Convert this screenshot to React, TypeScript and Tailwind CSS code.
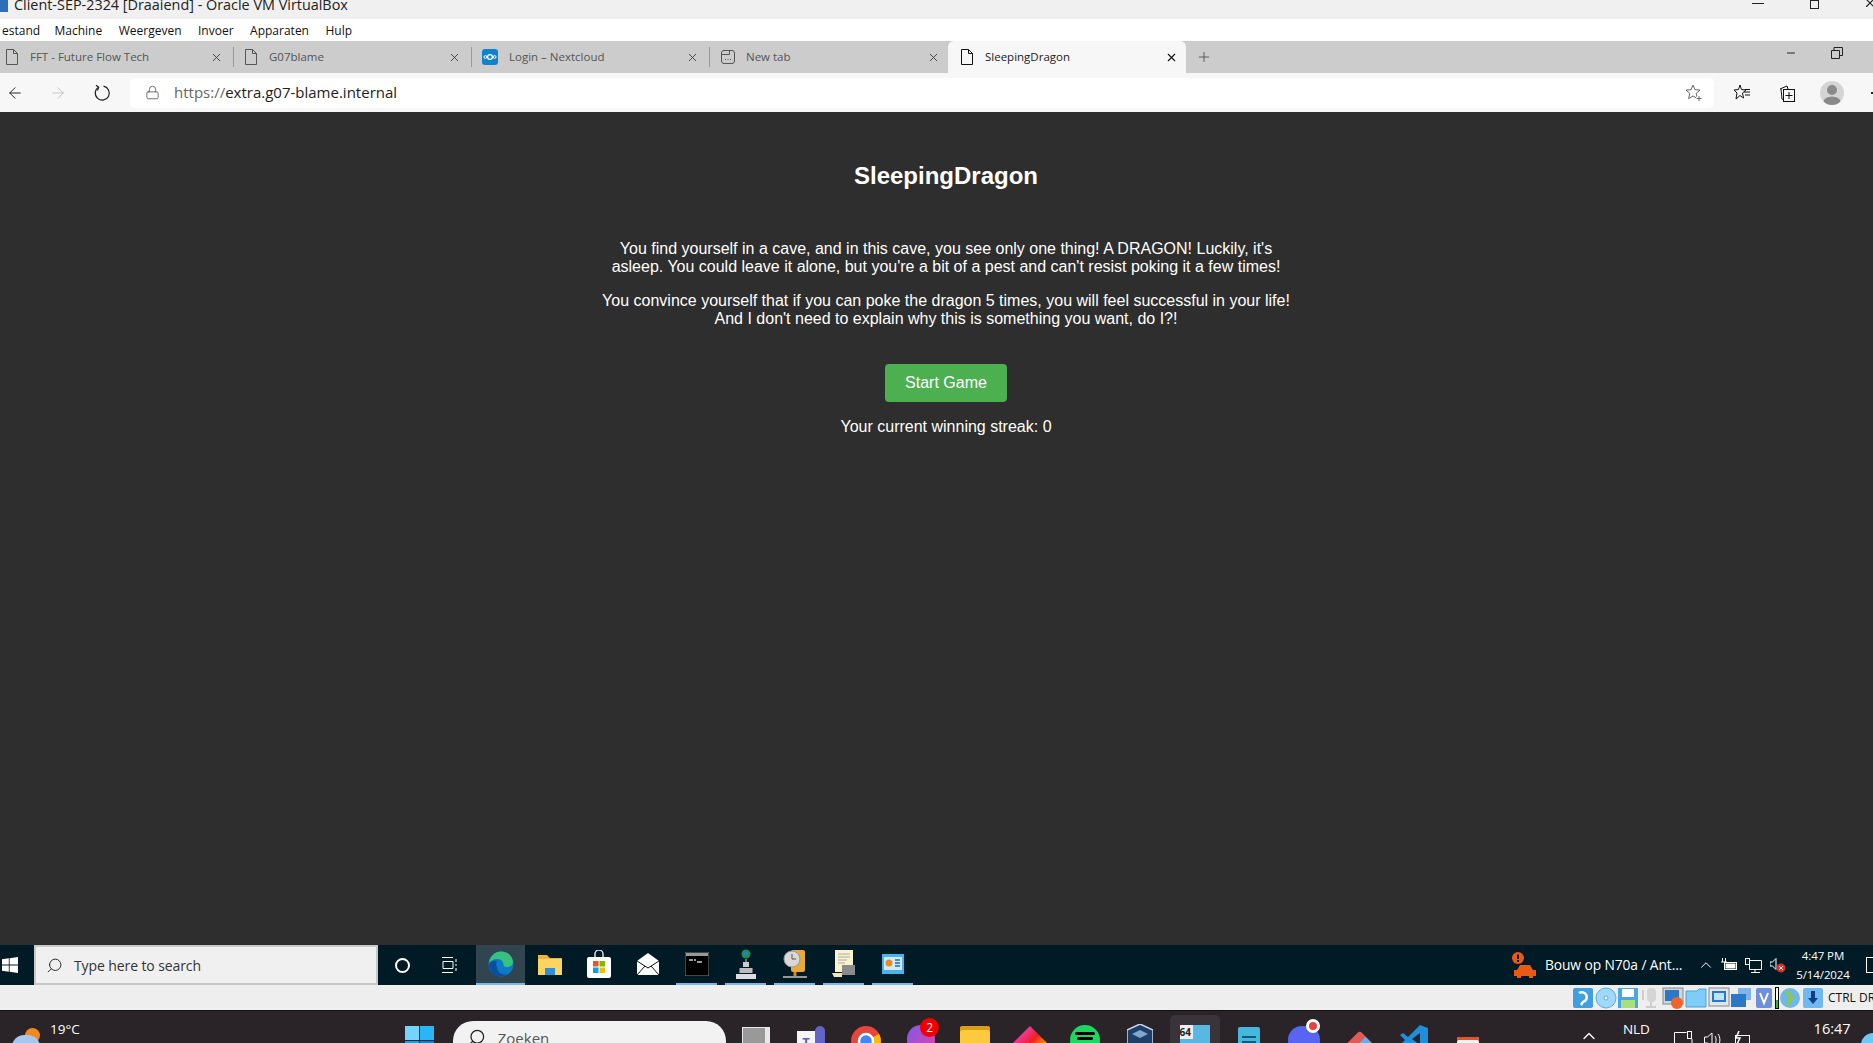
import React, { FC, ReactNode } from "react";
import { ArrowLeft, ArrowRight, Lock, Plus, X, Search, Minus, ChevronUp } from "lucide-react";

const uiFont = "font-['Open_Sans','Noto_Sans',sans-serif]";

const FileIcon: FC<{ dark?: boolean }> = ({ dark }) => (
  <svg width="14" height="16" viewBox="0 0 14 16" fill="none" stroke={dark ? "#111" : "#555"} strokeWidth="1" className="shrink-0">
    <path d="M1.5.5h7l4 4v11h-11zM8.5.5v4h4" />
  </svg>
);

const NewTabIcon = () => (
  <svg width="14" height="16" viewBox="0 0 14 16" fill="none" stroke="#555" className="shrink-0">
    <rect x=".5" y="1.5" width="13" height="13" rx="2.5" />
    <path d="M1 5.5h7.5V2" />
    <path d="M4 10.5h1M6.5 10.5h1M9 10.5h1" />
  </svg>
);

const CloudIcon = () => (
  <svg width="16" height="16" viewBox="0 0 16 16" className="shrink-0">
    <rect width="16" height="16" rx="3" fill="#0f82ce" />
    <circle cx="8" cy="8" r="2.4" fill="none" stroke="#fff" strokeWidth="1.3" />
    <circle cx="3.4" cy="8" r="1.4" fill="none" stroke="#fff" />
    <circle cx="12.6" cy="8" r="1.4" fill="none" stroke="#fff" />
  </svg>
);

const Tab: FC<{ icon: ReactNode; label: string; first?: boolean }> = ({ icon, label, first }) => (
  <div className={`flex h-full items-center ${first ? "w-[234px] pl-[5px]" : "w-[238px] pl-[10px]"} shrink-0`}>
    {icon}
    <span className="ml-[11px] flex-1 text-[11.5px] text-[#555]">{label}</span>
    <X size={13} color="#444" strokeWidth={1.8} />
    <span className="ml-[10px] h-[20px] w-px bg-[#9a9a9a]" />
  </div>
);

const WinLogo: FC<{ size: number; color: string }> = ({ size, color }) => (
  <svg width={size} height={size} viewBox="0 0 16 16" fill={color}>
    <path d="M0 2.3 6.8 1.3v6.2H0zM7.6 1.2 16 0v7.5H7.6zM0 8.4h6.8v6.3L0 13.7zM7.6 8.4H16V16l-8.4-1.2z" />
  </svg>
);

const Edge = () => (
  <svg width="26" height="26" viewBox="0 0 26 26">
    <circle cx="13" cy="13" r="12.5" fill="#0c7bc4" />
    <path d="M1 12C2 5 7 .5 13 .5c7 0 12 5 12 11 0 3-3 4.5-6 4.5-2 0-3.500-1-3.500-2 0-3-2-6-6-6-4 0-7 2-8.500 4z" fill="#36c27c" />
    <path d="M9 16c0 5 5 9 11 7-3 2-6 2.500-8 2.500C6 25.500 1 20 1 13c2-3 5-4 8-3-1 2-1 4 0 6z" fill="#0b4f9e" />
  </svg>
);

const Folder = () => (
  <svg width="24" height="22" viewBox="0 0 24 22">
    <path d="M0 2h9l3 3h12v17H0z" fill="#e9b43c" />
    <rect y="6" width="24" height="16" fill="#fcd462" />
    <rect x="7" y="15" width="10" height="7" fill="#2c8fd8" />
  </svg>
);

const Store = () => (
  <svg width="24" height="28" viewBox="0 0 24 28">
    <path d="M8 8V4a4 4 0 0 1 8 0v4" fill="none" stroke="#ddd" strokeWidth="1.500" />
    <rect y="7" width="24" height="21" rx="2" fill="#fff" />
    <rect x="6" y="11" width="5.500" height="5.500" fill="#f25022" />
    <rect x="12.500" y="11" width="5.500" height="5.500" fill="#7fba00" />
    <rect x="6" y="17.500" width="5.500" height="5.500" fill="#00a4ef" />
    <rect x="12.500" y="17.500" width="5.500" height="5.500" fill="#ffb900" />
  </svg>
);

const Mail = () => (
  <svg width="22" height="22" viewBox="0 0 22 22">
    <path d="M0 8 11 0l11 8v14H0z" fill="#fff" />
    <path d="M0 8l11 7 11-7M0 22l8-9M22 22l-8-9" stroke="#111" fill="none" />
  </svg>
);

const Cmd = () => (
  <svg width="24" height="24" viewBox="0 0 24 24">
    <rect width="24" height="24" fill="#000" stroke="#888" />
    <rect x="1" y="1" width="22" height="3" fill="#999" />
    <path d="M4 8h4M9 8h2M12 10h5" stroke="#ccc" strokeWidth="1.300" />
  </svg>
);

const Network = () => (
  <svg width="20" height="30" viewBox="0 0 20 30">
    <circle cx="10" cy="5" r="4.500" fill="#1f8f4f" />
    <path d="M7 3h5v3H8z" fill="#2e7bd0" />
    <path d="M10 10v3" stroke="#ccc" />
    <rect x="7" y="13" width="6" height="5" fill="#ccc" />
    <rect x="3.500" y="19" width="13" height="5" fill="#bbb" />
    <rect y="25" width="20" height="5" fill="#ddd" />
  </svg>
);

const TimeFolder = () => (
  <svg width="24" height="30" viewBox="0 0 24 30">
    <rect x="8" y="1" width="14" height="22" rx="2" fill="#e8a93a" />
    <circle cx="9" cy="10" r="8" fill="#d8d8d8" stroke="#999" />
    <path d="M9 5v5h4" stroke="#555" fill="none" />
    <path d="M12 23v4" stroke="#d08a1e" strokeWidth="3" />
    <rect y="27" width="24" height="2" fill="#999" />
  </svg>
);

const Script = () => (
  <svg width="24" height="30" viewBox="0 0 24 30">
    <path d="M3 1h18v22H3z" fill="#fbf2cf" />
    <path d="M6 5h12M6 8h12M6 11h9M6 14h7" stroke="#aaa" />
    <rect x="10" y="16" width="13" height="10" fill="#8a8a8a" />
    <path d="M0 24h10v4H2z" fill="#f3e7b5" />
  </svg>
);

const Panel = () => (
  <svg width="22" height="20" viewBox="0 0 22 20">
    <rect width="22" height="20" fill="#49b4ec" />
    <rect x="2" y="3" width="18" height="13" fill="#cfeafa" />
    <circle cx="7" cy="9" r="3.500" fill="#e88c2a" />
    <path d="M13 6h5M13 9h5M13 12h5" stroke="#1c6fb0" strokeWidth="1.500" />
  </svg>
);

const StatusIcon: FC<{ children: ReactNode }> = ({ children }) => (
  <svg width="22" height="22" viewBox="0 0 22 22" className="shrink-0">
    {children}
  </svg>
);

const VmStatus = () => (
  <div className="flex items-center gap-[0.6px]">
    <StatusIcon>
      <rect x="1" y="1" width="20" height="20" rx="2" fill="#3f9fe0" />
      <path d="M7 6a5 5 0 1 1 4 9l-2 3" fill="none" stroke="#fff" strokeWidth="2.500" />
    </StatusIcon>
    <StatusIcon>
      <circle cx="11" cy="11" r="10" fill="#9fd8f8" stroke="#56aee4" />
      <circle cx="11" cy="11" r="2" fill="#fff" stroke="#56aee4" />
    </StatusIcon>
    <StatusIcon>
      <rect x="1" y="1" width="20" height="20" fill="#4aa7e6" />
      <rect x="5" y="2" width="12" height="8" fill="#fff" />
      <rect x="4" y="13" width="14" height="8" fill="#a8e07a" />
    </StatusIcon>
    <StatusIcon>
      <rect x="7" y="1" width="9" height="14" rx="4" fill="#d5d5d5" />
      <path d="M3 3v10M11 15v4M6 20h10" stroke="#ccc" strokeWidth="2" />
    </StatusIcon>
    <StatusIcon>
      <rect x="1" y="1" width="20" height="16" fill="#cfd7de" stroke="#888" />
      <rect x="3" y="3" width="14" height="11" fill="#2b78c8" />
      <circle cx="15" cy="16" r="6" fill="#f0642a" />
    </StatusIcon>
    <StatusIcon>
      <path d="M1 4h11l2-2h7v18H1z" fill="#7fcdf6" stroke="#4aa3da" />
    </StatusIcon>
    <StatusIcon>
      <rect x="1" y="1" width="20" height="18" fill="#dfe5ea" stroke="#888" />
      <rect x="4" y="4" width="14" height="11" fill="#2b78c8" />
      <rect x="6" y="6" width="10" height="7" fill="#bfe3fa" />
    </StatusIcon>
    <StatusIcon>
      <rect x="8" y="1" width="13" height="12" fill="#7fb4ea" />
      <rect x="1" y="7" width="15" height="13" fill="#2b78c8" />
    </StatusIcon>
    <div className="flex items-center">
      <StatusIcon>
        <rect x="3" y="1" width="16" height="20" rx="2" fill="#6d8fdc" />
        <path d="M7 6l4 10 4-10" fill="none" stroke="#fff" strokeWidth="2" />
      </StatusIcon>
      <div className="flex h-[22px] w-[4px] shrink-0 items-end border border-black bg-white">
        <div className="h-[8px] w-full bg-[#2fb82f]" />
      </div>
    </div>
    <StatusIcon>
      <circle cx="11" cy="11" r="10" fill="#6fb6ea" />
      <path d="M9 3l6 8-6 8-2-2 3-6-3-6z" fill="#8ccb3f" />
    </StatusIcon>
    <StatusIcon>
      <rect x="1" y="1" width="20" height="20" rx="2" fill="#6db9f0" />
      <path d="M9 4h4v7h3l-5 6-5-6h3z" fill="#123d85" />
    </StatusIcon>
  </div>
);

const TaskSlot: FC<{ children: ReactNode; bar?: boolean; active?: boolean }> = ({ children, bar, active }) => (
  <div className={`relative flex h-full w-[49px] shrink-0 items-center justify-center pb-[2px] ${active ? "bg-[#30454f]" : ""}`}>
    {children}
    {bar && <span className={`absolute bottom-0 h-[2px] bg-[#76b9ed] ${active ? "inset-x-0" : "inset-x-[4px]"}`} />}
  </div>
);

const DockSlot: FC<{ children: ReactNode }> = ({ children }) => (
  <div className="relative flex h-[33px] w-[54.800px] shrink-0 justify-center pt-[8px]">{children}</div>
);

const App: FC = () => {
  return (
    <div className={`flex h-[1043px] w-[1873px] flex-col overflow-hidden bg-[#2e2e2e] ${uiFont}`}>
      {/* vm title */}
      <div className="flex h-[19px] shrink-0 items-start overflow-hidden bg-[#f0f0f0]">
        <div className="h-[12px] w-[8px] bg-[#2a6fb8]" />
        <span className="ml-[6px] text-[14.4px] leading-[10px] text-[#222]">
          Client-SEP-2324 [Draaiend] - Oracle VM VirtualBox
        </span>
        <div className="ml-auto flex items-start pt-[3px]">
          <span className="h-px w-[12px] bg-[#222]" />
          <span className="ml-[46px] mt-[-3px] h-[9px] w-[9px] border border-[#222]" />
          <X size={14} color="#222" className="ml-[44px] mt-[-7px] mr-[-4px]" />
        </div>
      </div>

      {/* vm menu */}
      <div className="flex h-[22px] shrink-0 items-center gap-[16.5px] overflow-hidden bg-white pl-[2px] pt-[1px] text-[12px] text-[#111]">
        <span className="w-[36px] shrink-0 text-right">estand</span>
        <span>Machine</span>
        <span>Weergeven</span>
        <span>Invoer</span>
        <span>Apparaten</span>
        <span>Hulp</span>
      </div>

      {/* tabs */}
      <div className="flex h-[32px] shrink-0 items-center bg-[#cccccc]">
        <Tab first icon={<FileIcon />} label="FFT - Future Flow Tech" />
        <Tab icon={<FileIcon />} label="G07blame" />
        <Tab icon={<CloudIcon />} label="Login – Nextcloud" />
        <div className="flex h-full w-[238px] shrink-0 items-center pl-[11px] pr-[7px]">
          <NewTabIcon />
          <span className="ml-[11px] flex-1 text-[11.5px] text-[#555]">New tab</span>
          <X size={13} color="#444" strokeWidth={1.8} className="mr-[1px]" />
        </div>
        <div className="flex h-full w-[238px] shrink-0 items-center rounded-t-[6px] bg-[#f7f7f7] pl-[12px] pr-[8px]">
          <FileIcon dark />
          <span className="ml-[11px] flex-1 text-[11.5px] text-[#222]">SleepingDragon</span>
          <X size={13} color="#111" strokeWidth={2} />
        </div>
        <Plus size={16} color="#444" strokeWidth={1.2} className="ml-[10px]" />
        <div className="ml-auto flex items-center pb-[9px]">
          <Minus size={12} color="#222" />
          <svg width="12" height="12" viewBox="0 0 12 12" fill="none" stroke="#222" className="ml-[34px] mr-[30px]">
            <path d="M.5 3.500h8v8h-8zM3 3.500V.5h8.500v8H8.500" />
          </svg>
        </div>
      </div>

      {/* address bar */}
      <div className="flex h-[39px] shrink-0 items-center bg-[#f7f7f7]">
        <div className="flex w-[130px] shrink-0 items-center">
          <ArrowLeft size={18} color="#222" strokeWidth={1.3} className="ml-[6px]" />
          <ArrowRight size={18} color="#c4c4c4" strokeWidth={1.3} className="ml-[25px]" />
          <svg width="18" height="18" viewBox="0 0 18 18" fill="none" stroke="#222" strokeWidth="1.200" className="ml-[26px]">
            <path d="M5.500 3.200A7 7 0 1 0 10.500 2.200" />
            <path d="M3 1.200l2.700 2-1.200 3.400" />
          </svg>
        </div>
        <div className="flex h-[30px] w-[1584px] shrink-0 items-center rounded-[5px] bg-white pl-[15px] pr-[12px]">
          <Lock size={15} color="#555" strokeWidth={1.3} />
          <span className="ml-[14px] flex-1 text-[15px] text-[#222]">
            <span className="text-[#666]">https://</span>extra.g07-blame.internal
          </span>
          <svg width="17" height="17" viewBox="0 0 17 17" fill="none" stroke="#666">
            <path d="M8 1l2 4.700 5 .4-3.800 3.300L12.400 14.500 8 12l-4.400 2.500 1.200-5.100L1 6.100l5-.4z" />
            <path d="M11 14.500h5M13.500 12v5" stroke="#fff" strokeWidth="3" />
            <path d="M11.500 14.500h5M14 12v5" />
          </svg>
        </div>
        <svg width="16" height="17" viewBox="0 0 16 17" fill="none" stroke="#111" className="ml-[20px] shrink-0">
          <path d="M6 1l1.500 4.500L12 6 8.500 9l1 5L6 11.500 2 15l1-6L0 6l4.500-.5zM10 8h6M11 11h5M11 5.500h5" />
        </svg>
        <svg width="16" height="18" viewBox="0 0 16 18" fill="none" stroke="#111" className="ml-[29px] shrink-0">
          <path d="M1 5l7-3 1 3M2 5l1 10 2 1" />
          <rect x="4.500" y="5.500" width="11" height="12" />
          <path d="M10 8v7M6.500 11.500h7" />
        </svg>
        <div className="ml-[25px] flex h-[24px] w-[24px] shrink-0 items-start justify-center overflow-hidden rounded-full bg-[#d4d4d4]">
          <svg width="24" height="24" viewBox="0 0 24 24" fill="#8a8a8a">
            <circle cx="12" cy="9" r="5" />
            <ellipse cx="12" cy="21" rx="8.500" ry="5.500" />
          </svg>
        </div>
        <span className="ml-[27px] h-[2px] w-[2px] shrink-0 bg-[#222]" />
      </div>

      {/* page */}
      <main className="flex min-h-0 flex-1 flex-col items-center bg-[#2e2e2e] pl-[19px] pt-[50px] text-center font-['Liberation_Sans',Arial,sans-serif] text-white">
        <h1 className="text-[24px] font-bold leading-[28px]">SleepingDragon</h1>
        <p className="mt-[50px] text-[16px] leading-[18px]">
          You find yourself in a cave, and in this cave, you see only one thing! A DRAGON! Luckily, it's
          <br />
          asleep. You could leave it alone, but you're a bit of a pest and can't resist poking it a few times!
        </p>
        <p className="mt-[16px] text-[16px] leading-[18px]">
          You convince yourself that if you can poke the dragon 5 times, you will feel successful in your life!
          <br />
          And I don't need to explain why this is something you want, do I?!
        </p>
        <button className="mt-[36px] h-[38px] w-[122px] rounded-[4px] bg-[#4caf50] text-[16px] text-white">
          Start Game
        </button>
        <p className="mt-[16px] text-[16px] leading-[18px]">Your current winning streak: 0</p>
      </main>

      {/* guest taskbar */}
      <div className="flex h-[40px] shrink-0 items-center bg-[#001a26] text-white">
        <div className="flex h-full w-[34px] shrink-0 items-center justify-center">
          <div className="mr-[14px]">
            <WinLogo size={16} color="#fff" />
          </div>
        </div>
        <div className="flex h-full w-[344px] shrink-0 items-center border-2 border-[#c8c8c8] bg-[#f0f0f0] pl-[10px] text-[14px] text-[#333]">
          <Search size={17} color="#222" strokeWidth={1.3} className="-scale-x-100" />
          <span className="ml-[11px] tracking-[-0.1px]">Type here to search</span>
        </div>
        <div className="flex h-full w-[48px] shrink-0 items-center justify-center">
          <span className="h-[15px] w-[15px] rounded-full border-2 border-white" />
        </div>
        <div className="flex h-full w-[47px] shrink-0 items-center justify-center">
          <svg width="16" height="16" viewBox="0 0 16 16" fill="none" stroke="#fff">
            <path d="M0 .5h11M0 15.500h11M1 4.500h10v7H1zM14 2v3M14 7v2M14 11v3" />
          </svg>
        </div>
        <div className="ml-[3px] flex h-full">
          <TaskSlot bar active><Edge /></TaskSlot>
          <TaskSlot><Folder /></TaskSlot>
          <TaskSlot><Store /></TaskSlot>
          <TaskSlot><Mail /></TaskSlot>
          <TaskSlot bar><Cmd /></TaskSlot>
          <TaskSlot bar><Network /></TaskSlot>
          <TaskSlot bar><TimeFolder /></TaskSlot>
          <TaskSlot bar><Script /></TaskSlot>
          <TaskSlot bar><Panel /></TaskSlot>
        </div>
        <div className="ml-auto flex h-full items-center text-[14px]">
          <svg width="26" height="26" viewBox="0 0 26 26" fill="#ea5a14" className="shrink-0">
            <circle cx="6" cy="6" r="6" />
            <rect x="5" y="2.500" width="2" height="4.500" fill="#111" />
            <rect x="5" y="8" width="2" height="2" fill="#111" />
            <path d="M8 13h10l3 5h3v6h-3v2h-4v-2H9v2H5v-2H2v-6h3z" />
          </svg>
          <span className="ml-[7px] w-[140px] overflow-hidden whitespace-nowrap text-[13.800px] tracking-[-0.1px]">
            Bouw op N70a / Ant...
          </span>
          <ChevronUp size={18} strokeWidth={1.3} className="ml-[12px]" />
          <svg width="16" height="14" viewBox="0 0 16 14" fill="none" stroke="#fff" className="ml-[6px]">
            <rect x="3.500" y="4.500" width="12" height="7" />
            <rect x="5" y="6" width="9" height="4" fill="#fff" />
            <path d="M1.500 0v4M4.500 0v4M0 4h6" />
          </svg>
          <svg width="17" height="15" viewBox="0 0 17 15" fill="none" stroke="#fff" className="ml-[8px]">
            <path d="M4.500 2.500h12v9h-12zM10 11.500v3M6 14.500h9" />
            <rect x=".5" y=".5" width="4" height="6" fill="#001a26" />
          </svg>
          <svg width="16" height="16" viewBox="0 0 16 16" className="ml-[8px]">
            <path d="M0 5h2.500L6 1.500v11L2.500 9H0z" fill="none" stroke="#fff" />
            <circle cx="11" cy="11" r="4.500" fill="#e22c2c" />
            <path d="M9 9l4 4M13 9l-4 4" stroke="#fff" />
          </svg>
          <div className="ml-[9px] flex w-[56px] flex-col items-center text-[11.500px] leading-[19px] tracking-[-0.1px]">
            <span>4:47 PM</span>
            <span>5/14/2024</span>
          </div>
          <span className="ml-[15px] mr-[-7px] h-[16px] w-[14px] border border-white" />
        </div>
      </div>

      {/* vm status */}
      <div className="flex h-[25px] shrink-0 items-center justify-end overflow-hidden bg-[#eeeeee]">
        <VmStatus />
        <span className="ml-[4px] w-[45px] shrink-0 overflow-hidden whitespace-nowrap text-[12px] text-[#111]">CTRL DRECHTS</span>
      </div>

      {/* host taskbar */}
      <div className="flex h-[33px] shrink-0 items-start overflow-hidden border-t border-[#111] bg-[#2a2428] text-white">
        <div className="relative ml-[10px] h-[33px] w-[40px] shrink-0">
          <span className="absolute left-[15px] top-[17px] h-[15px] w-[15px] rounded-full bg-[#f08a1e]" />
          <span className="absolute left-[2px] top-[24px] h-[24px] w-[28px] rounded-full bg-[#a9c6ee]" />
        </div>
        <span className="text-[13.500px] leading-[36px]">19°C</span>
        <div className="ml-[325px] shrink-0 pt-[15px]">
          <svg width="30" height="30" viewBox="0 0 30 30">
            <rect width="14" height="14" fill="#76d3fb" />
            <rect x="15" width="14" height="14" fill="#29b6f6" />
            <rect y="15" width="14" height="14" fill="#1e9de0" />
            <rect x="15" y="15" width="14" height="14" fill="#0d80d0" />
          </svg>
        </div>
        <div className="ml-[18px] mt-[10px] flex h-[40px] w-[273px] shrink-0 items-start rounded-t-[20px] bg-[#f2f2f2] pl-[14px] pt-[7px] text-[15px] text-[#555]">
          <Search size={19} color="#222" strokeWidth={1.6} className="-scale-x-100" />
          <span className="ml-[12px] leading-[20px]">Zoeken</span>
        </div>
        <div className="ml-[3px] flex shrink-0">
          <DockSlot>
            <span className="mt-[8px] h-[30px] w-[28px] bg-[#e8e8e8]" />
            <span className="absolute left-[14px] top-[17px] h-[20px] w-[22px] bg-[#999]" />
          </DockSlot>
          <DockSlot>
            <span className="mt-[12px] h-[24px] w-[18px] bg-[#f5f5f5] text-center text-[13px] font-bold leading-[22px] text-[#5b5fc7]">T</span>
            <span className="mt-[7px] h-[24px] w-[10px] rounded-t-full bg-[#6264c8]" />
          </DockSlot>
          <DockSlot>
            <svg width="30" height="30" viewBox="0 0 30 30" className="mt-[7px]">
              <circle cx="15" cy="15" r="15" fill="#e8453c" />
              <path d="M15 15 2 22A15 15 0 0 0 15 30z" fill="#34a853" />
              <path d="M15 15l13 7A15 15 0 0 0 28 8z" fill="#fbbc05" />
              <circle cx="15" cy="15" r="7" fill="#4285f4" stroke="#fff" strokeWidth="2.500" />
            </svg>
          </DockSlot>
          <DockSlot>
            <span className="mt-[6px] h-[30px] w-[28px] rounded-full bg-[linear-gradient(135deg,#7b5cf0,#e6409a)]" />
            <span className="absolute left-[27px] top-[7px] flex h-[19px] w-[19px] items-center justify-center rounded-full bg-[#f00000] text-[12px]">2</span>
          </DockSlot>
          <DockSlot>
            <span className="mt-[7px] h-[30px] w-[30px] rounded-t-[3px] bg-[#fcc93f] shadow-[inset_0_4px_0_#d99f14]" />
          </DockSlot>
          <DockSlot>
            <span className="mt-[12px] h-[24px] w-[24px] rotate-45 bg-[linear-gradient(90deg,#f0389a,#f02020,#f8a000)]" />
          </DockSlot>
          <DockSlot>
            <span className="mt-[6px] flex h-[30px] w-[30px] flex-col items-center gap-[2px] rounded-full bg-[#1ed760] pt-[7px]">
              <span className="h-[3px] w-[20px] rounded-full bg-black" />
              <span className="h-[3px] w-[16px] rounded-full bg-black" />
            </span>
          </DockSlot>
          <DockSlot>
            <svg width="26" height="30" viewBox="0 0 26 30" className="mt-[5px]">
              <path d="M13 0l13 6v16l-13 8-13-8V6z" fill="#1f3f66" stroke="#c9d8ea" strokeWidth="1.500" />
              <path d="M13 6l8 4-8 4-8-4z" fill="#7da6d2" />
            </svg>
          </DockSlot>
          <DockSlot>
            <span className="absolute top-[4px] h-[36px] w-[50px] rounded-t-[5px] bg-[#38343a]" />
            <span className="relative mt-[6px] h-[30px] w-[30px] bg-[#5ab7e2] text-[10px] font-bold leading-[14px] text-[#222]">
              <span className="block w-[13px] bg-[#eee]">64</span>
            </span>
          </DockSlot>
          <DockSlot>
            <span className="mt-[8px] flex h-[30px] w-[22px] flex-col gap-[3px] rounded-[2px] bg-[#45b6dc] px-[4px] pt-[9px]">
              <span className="h-[2px] bg-[#0f5a80]" />
              <span className="h-[2px] bg-[#0f5a80]" />
            </span>
          </DockSlot>
          <DockSlot>
            <span className="mt-[7px] h-[28px] w-[32px] rounded-full bg-[#5865f2]" />
            <span className="absolute left-[29px] top-[8px] h-[14px] w-[14px] rounded-full border-[3px] border-white bg-[#e84040]" />
          </DockSlot>
          <DockSlot>
            <span className="mt-[16px] h-[24px] w-[22px] rotate-45 rounded-[3px] bg-[linear-gradient(90deg,#e05a5a,#e05a5a_40%,#6fa8e8_40%,#6fa8e8_70%,#7cc242_70%)]" />
          </DockSlot>
          <DockSlot>
            <svg width="28" height="28" viewBox="0 0 28 28" className="mt-[6px]">
              <path d="M20 0 8 12 3 8 0 10l5 5-5 5 3 2 5-4 12 10 8-3V3z" fill="#1f8fdc" />
              <path d="M20 8v12l-8-6z" fill="#2e2428" />
            </svg>
          </DockSlot>
          <DockSlot>
            <span className="mt-[18px] h-[14px] w-[22px] rounded-[2px] bg-[#f2f2f2] shadow-[inset_0_3px_0_#e8502a]" />
          </DockSlot>
        </div>
        <ChevronUp size={20} strokeWidth={1.6} className="ml-[83px] mt-[15px] shrink-0" />
        <span className="ml-[24px] shrink-0 text-[13.500px] leading-[36px] tracking-[-0.1px]">NLD</span>
        <div className="ml-[24px] flex shrink-0 gap-[10px] pt-[20px]">
          <svg width="20" height="20" viewBox="0 0 20 20" fill="none" stroke="#fff">
            <path d="M.5 16V1.500h12M18 8v8" />
            <rect x="13.500" y=".5" width="4" height="7" />
          </svg>
          <svg width="18" height="20" viewBox="0 0 18 20" fill="none" stroke="#fff">
            <path d="M.5 6h3L8 2v14L3.500 12h-3zM11 5c1.500 2 1.500 6 0 8M14 3c2.500 3 2.500 9 0 12" />
          </svg>
          <svg width="20" height="20" viewBox="0 0 20 20" fill="none" stroke="#fff">
            <rect x="3.500" y="4.500" width="14" height="12" />
            <path d="M7 0 4 7h4l-3 6" strokeWidth="1.500" />
          </svg>
        </div>
        <span className="ml-[62px] shrink-0 text-[14.500px] leading-[36px]">16:47</span>
        <span className="ml-[10px] mt-[22px] h-[24px] w-[24px] shrink-0 rounded-full bg-[#6fc8f4]" />
      </div>
    </div>
  );
};

export default App;
